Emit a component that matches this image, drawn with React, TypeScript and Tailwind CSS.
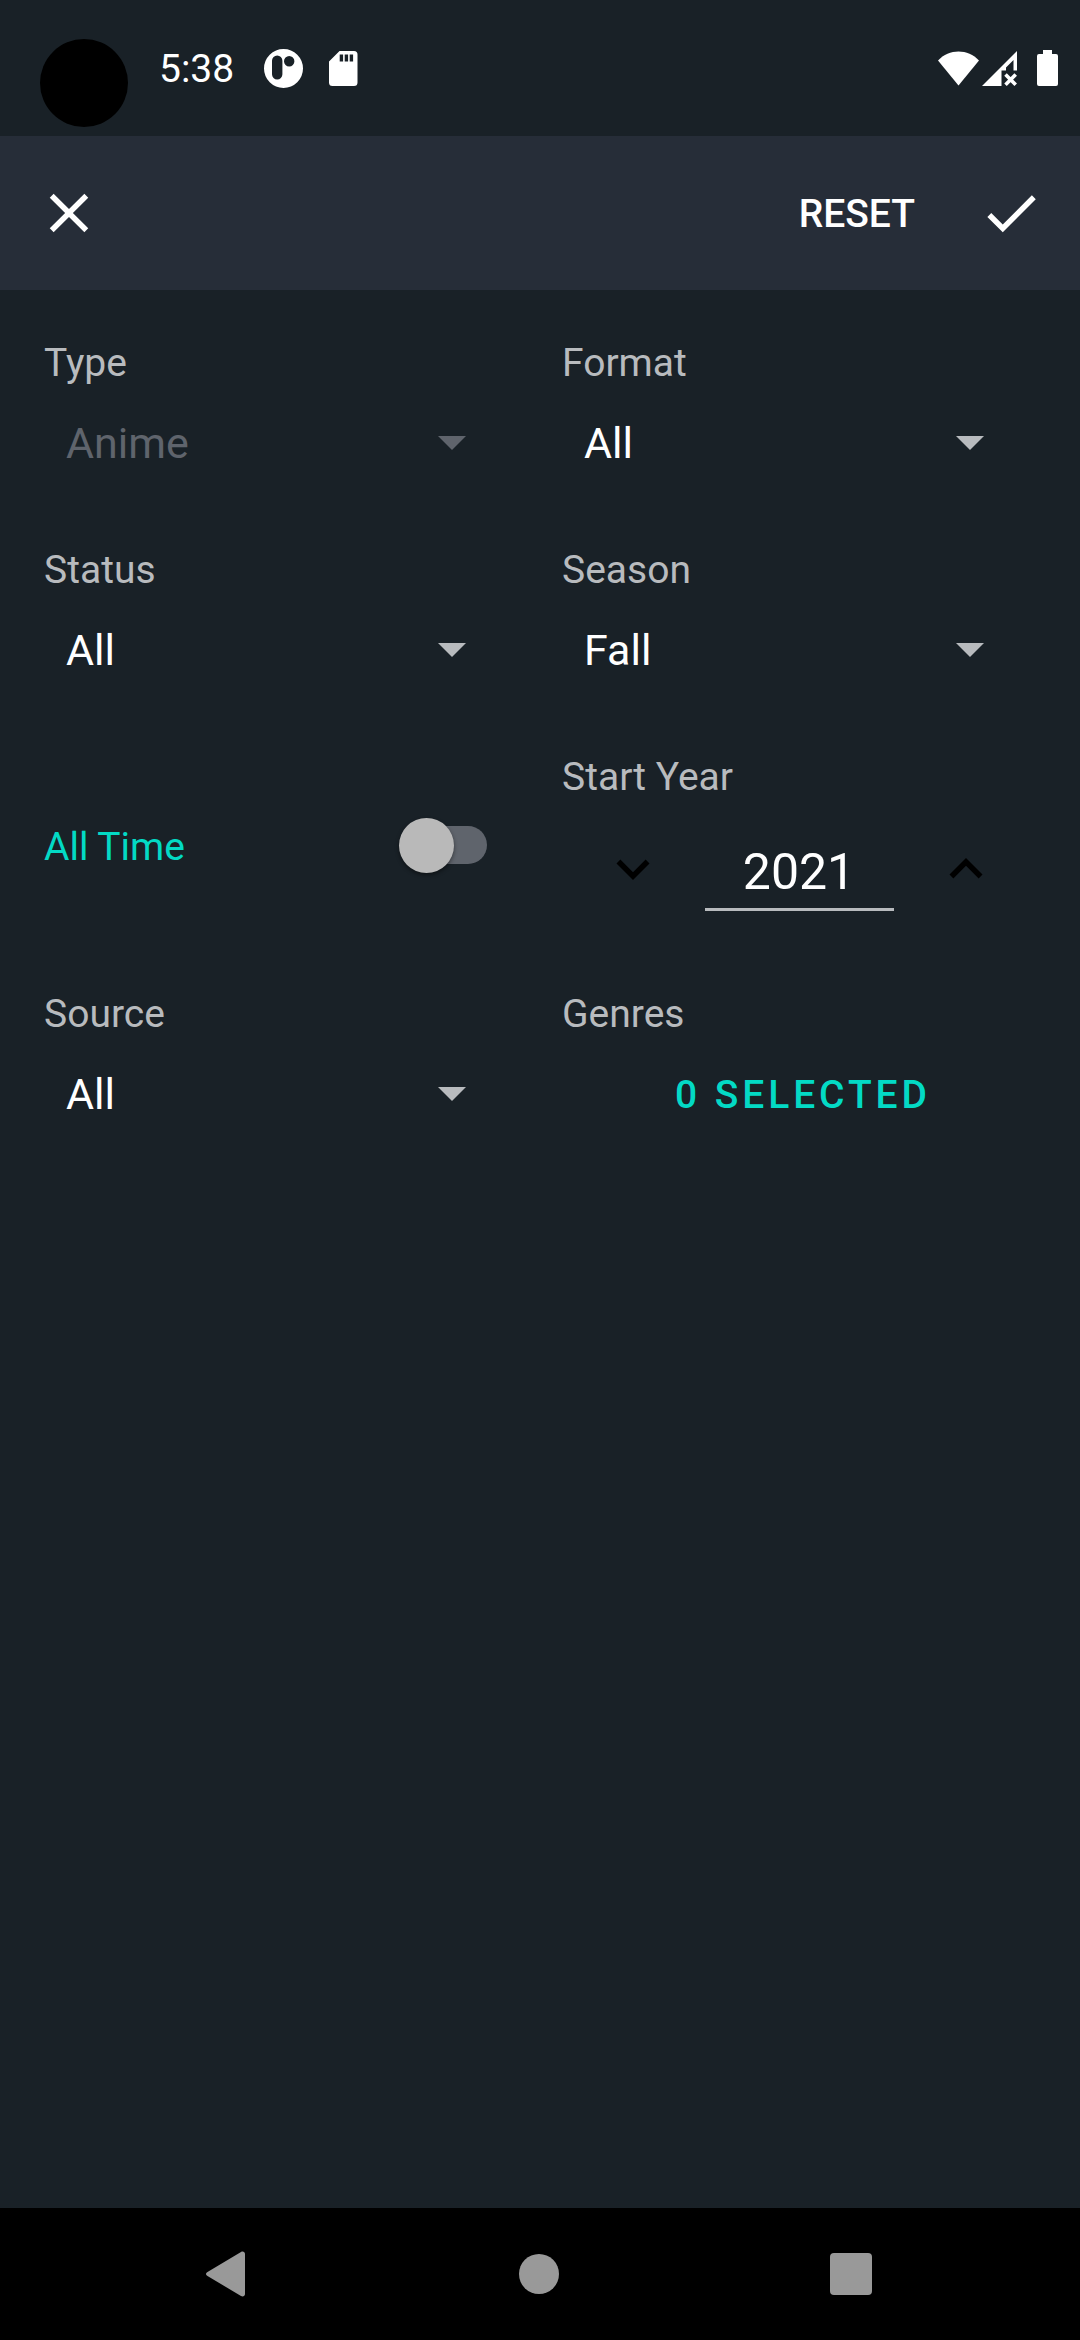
import { useState } from "react";
import type { ReactNode } from "react";
import { MdCheck, MdClose, MdExpandLess, MdExpandMore } from "react-icons/md";

function StatusBar() {
  return (
    <div className="flex h-[136px] shrink-0 items-center pr-[22px] pl-10 text-white">
      <span className="mt-[30px] h-[88px] w-[88px] rounded-full bg-black" />
      <span className="ml-[31px] pt-0.5 text-[39px] leading-[46px]">5:38</span>
      <svg className="ml-[30px] h-[39px] w-[39px]" viewBox="0 0 39 39" aria-hidden="true">
        <path
          fillRule="evenodd"
          fill="currentColor"
          d="M19.500 0a19.500 19.500 0 1 0 0 39a19.500 19.500 0 1 0 0-39zM13.200 6.500a5.200 5.200 0 0 1 5.200 5.200v13.600a5.200 5.200 0 0 1-10.400 0v-13.600a5.200 5.200 0 0 1 5.200-5.200zM25.200 7a5.200 5.200 0 1 1 0 10.400a5.200 5.200 0 1 1 0-10.400z"
        />
      </svg>
      <svg className="ml-[26px] h-[35px] w-[29px]" viewBox="0 0 29 35" aria-hidden="true">
        <path
          fillRule="evenodd"
          fill="currentColor"
          d="M10.500 0H25a3.500 3.500 0 0 1 3.500 3.500V31.500a3.500 3.500 0 0 1-3.500 3.500H3.500a3.500 3.500 0 0 1-3.500-3.500V10.500zM10.700 3.500v7h3.400v-7zM15.700 3.500v7h3.400v-7zM20.700 3.500v7h3.400v-7z"
        />
      </svg>
      <svg className="ml-auto h-[35px] w-[41px]" viewBox="0 0 41 35" aria-hidden="true">
        <path fill="currentColor" d="M0 9.500C11-2.500 30-2.500 41 9.500L20.500 34.500z" />
      </svg>
      <svg className="ml-[3px] h-[35px] w-[35px]" viewBox="0 0 35 35" aria-hidden="true">
        <path fill="currentColor" d="M0 35L35 0V19.500H31.500V9L24 16.500V19.500H19.500V35z" />
        <path stroke="currentColor" strokeWidth="3.600" d="M23.500 23.500L33.700 33.700M33.700 23.500L23.500 33.700" />
      </svg>
      <svg className="ml-5 h-[36px] w-[21px]" viewBox="0 0 21 36" aria-hidden="true">
        <path
          fill="currentColor"
          d="M6 0h9v4h4a2 2 0 0 1 2 2v28a2 2 0 0 1-2 2H2a2 2 0 0 1-2-2V6a2 2 0 0 1 2-2h4z"
        />
      </svg>
    </div>
  );
}

function Toolbar() {
  return (
    <header className="flex h-[154px] shrink-0 items-center bg-[#262d38] px-9 text-white">
      <button type="button" aria-label="Close">
        <MdClose className="h-[66px] w-[66px]" />
      </button>
      <button type="button" className="ml-auto pt-0.5 text-[39px] leading-[46px] font-medium">
        RESET
      </button>
      <button type="button" aria-label="Apply" className="ml-[63px]">
        <MdCheck className="h-[66px] w-[66px]" />
      </button>
    </header>
  );
}

function Field({ id, label, children }: { id: string; label: string; children: ReactNode }) {
  return (
    <div>
      <label htmlFor={id} className="block text-[39px] leading-[56px] text-[#b8bbbe]">
        {label}
      </label>
      {children}
    </div>
  );
}

type SelectFieldProps = { id: string; label: string; options: string[]; disabled?: boolean };

function SelectField({ id, label, options, disabled }: SelectFieldProps) {
  return (
    <Field id={id} label={label}>
      <div className="relative">
        <select
          id={id}
          disabled={disabled}
          className="block h-[106px] w-full appearance-none bg-transparent pr-20 pb-0.5 pl-[22px] text-[43px] text-white opacity-100 outline-none disabled:text-[#5f646c]"
        >
          {options.map((option) => (
            <option key={option}>{option}</option>
          ))}
        </select>
        <svg
          className={
            disabled
              ? "pointer-events-none absolute top-[45px] right-[52px] h-[14px] w-[28px] text-[#5f646c]"
              : "pointer-events-none absolute top-[45px] right-[52px] h-[14px] w-[28px] text-[#b8bbbe]"
          }
          viewBox="0 0 28 14"
          aria-hidden="true"
        >
          <path fill="currentColor" d="M0 0H28L14 14z" />
        </svg>
      </div>
    </Field>
  );
}

function YearField() {
  const [year, setYear] = useState(2021);
  return (
    <Field id="start-year" label="Start Year">
      <div className="flex h-[136px] items-center justify-center gap-[39px] pb-1">
        <button type="button" aria-label="Previous year" className="mb-1" onClick={() => setYear(year - 1)}>
          <MdExpandMore className="h-[66px] w-[66px] text-black" />
        </button>
        <input
          id="start-year"
          type="text"
          inputMode="numeric"
          value={year}
          onChange={(event) => setYear(Number(event.target.value) || 0)}
          className="h-20 w-[189px] border-b-[3px] border-[#b8bbbe] bg-transparent pt-1 text-center text-[50px] text-white outline-none"
        />
        <button type="button" aria-label="Next year" className="mb-1" onClick={() => setYear(year + 1)}>
          <MdExpandLess className="h-[66px] w-[66px] text-black" />
        </button>
      </div>
    </Field>
  );
}

function AllTimeSwitch() {
  return (
    <label className="flex items-center justify-between pr-[31px] text-[39px] leading-[46px] text-[#03dac5]">
      <span className="pt-1">All Time</span>
      <span className="relative flex h-[55px] w-[88px] items-center justify-end">
        <input type="checkbox" role="switch" className="peer sr-only" />
        <span className="h-[38px] w-20 rounded-full bg-[#5f646c]" />
        <span className="absolute top-0 left-0 h-[55px] w-[55px] rounded-full bg-[#b9b9b9] shadow-[0_2px_4px_rgba(0,0,0,0.45)] peer-checked:left-[33px] peer-checked:bg-[#03dac5]" />
      </span>
    </label>
  );
}

function NavigationBar() {
  return (
    <nav className="flex h-[132px] shrink-0 items-center justify-between pr-[208px] pl-[206px] text-[#999999]">
      <button type="button" aria-label="Back">
        <svg className="h-[46px] w-[42px]" viewBox="0 0 42 46" aria-hidden="true">
          <path
            fill="currentColor"
            d="M1.500 21L35 1C37 0 39 1 39 3V43C39 45 37 46 35 45L1.500 25C-.5 24-.5 22 1.500 21z"
          />
        </svg>
      </button>
      <button type="button" aria-label="Home" className="h-10 w-10 rounded-full bg-current" />
      <button type="button" aria-label="Recent apps" className="h-[42px] w-[42px] rounded-[4px] bg-current" />
    </nav>
  );
}

export default function App() {
  return (
    <div className="flex min-h-screen flex-col bg-black font-[Roboto,sans-serif]">
      <div className="flex grow flex-col bg-[#192127]">
        <StatusBar />
        <Toolbar />
        <main className="grid grid-cols-2 gap-x-11 gap-y-[45px] px-11 pt-[45px] pb-11">
          <SelectField id="type" label="Type" options={["Anime", "Manga"]} disabled />
          <SelectField id="format" label="Format" options={["All", "TV", "Movie", "OVA"]} />
          <SelectField id="status" label="Status" options={["All", "Releasing", "Finished"]} />
          <SelectField id="season" label="Season" options={["Fall", "Winter", "Spring", "Summer"]} />
          <AllTimeSwitch />
          <YearField />
          <SelectField id="source" label="Source" options={["All", "Original", "Manga"]} />
          <Field id="genres" label="Genres">
            <button
              id="genres"
              type="button"
              className="block h-[106px] w-full pl-2 text-[39px] font-medium tracking-widest text-[#03dac5]"
            >
              0 SELECTED
            </button>
          </Field>
        </main>
      </div>
      <NavigationBar />
    </div>
  );
}
